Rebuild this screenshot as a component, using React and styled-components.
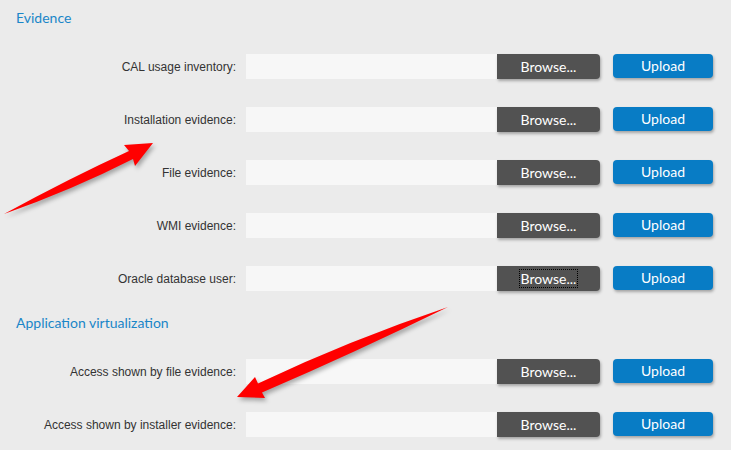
import React from "react";
import styled, { createGlobalStyle } from "styled-components";

const GlobalStyle = createGlobalStyle`
  html, body {
    margin: 0;
    padding: 0;
    background: #ebebeb;
  }
  body {
    font-family: "Liberation Sans", Arial, sans-serif;
  }
`;

const Page = styled.div`
  position: relative;
  width: 731px;
  height: 450px;
  overflow: hidden;
  padding: 8px 0 0 16px;
  box-sizing: border-box;
`;

const SectionTitle = styled.h2`
  margin: ${(p) => (p.$first ? "0" : "22px")} 0 26px 0;
  font-family: Lato, "Open Sans", sans-serif;
  font-weight: 400;
  font-size: 14px;
  line-height: 20px;
  color: #1a86c8;
`;

const Rows = styled.div`
  display: flex;
  flex-direction: column;
  gap: 28px;
`;

const Row = styled.div`
  display: flex;
  align-items: center;
  height: 25px;
`;

const Label = styled.label`
  width: 220px;
  margin-right: 10px;
  text-align: right;
  font-size: 12px;
  color: #333;
  white-space: nowrap;
`;

const FileField = styled.div`
  width: 251px;
  height: 25px;
  background: #f7f7f7;
`;

const Browse = styled.button`
  width: 103px;
  height: 25px;
  border: none;
  padding: 0;
  background: #525252;
  color: #fff;
  border-radius: 0 4px 4px 0;
  box-shadow: 1px 2px 3px rgba(0, 0, 0, 0.3);
  font-family: Lato, "Open Sans", sans-serif;
  font-size: 14px;
  display: flex;
  align-items: center;
  justify-content: center;

  span {
    padding: 0 1px;
    line-height: 17px;
    outline: ${(p) => (p.$focused ? "1px dotted #000" : "none")};
  }
`;

const Upload = styled.button`
  margin-left: 13px;
  margin-top: -2px;
  width: 100px;
  height: 24px;
  border: none;
  padding: 0;
  background: #087cc5;
  color: #fff;
  border-radius: 4px;
  box-shadow: 1px 2px 3px rgba(0, 0, 0, 0.3);
  font-family: Lato, "Open Sans", sans-serif;
  font-size: 14px;
`;

const Overlay = styled.svg`
  position: absolute;
  left: 0;
  top: 0;
  pointer-events: none;
  filter: drop-shadow(2px 3px 2px rgba(0, 0, 0, 0.3));
`;

const evidence = [
  "CAL usage inventory:",
  "Installation evidence:",
  "File evidence:",
  "WMI evidence:",
  "Oracle database user:",
];

const virtualization = [
  "Access shown by file evidence:",
  "Access shown by installer evidence:",
];

function UploadRow({ label, focused }) {
  return (
    <Row>
      <Label>{label}</Label>
      <FileField />
      <Browse $focused={focused}>
        <span>Browse...</span>
      </Browse>
      <Upload>Upload</Upload>
    </Row>
  );
}

export default function App() {
  return (
    <>
      <GlobalStyle />
      <Page>
        <SectionTitle $first>Evidence</SectionTitle>
        <Rows>
          {evidence.map((l) => (
            <UploadRow key={l} label={l} focused={l === "Oracle database user:"} />
          ))}
        </Rows>
        <SectionTitle>Application virtualization</SectionTitle>
        <Rows>
          {virtualization.map((l) => (
            <UploadRow key={l} label={l} />
          ))}
        </Rows>
        <Overlay width="731" height="450" viewBox="0 0 731 450">
          {/* arrow pointing at "Installation evidence" */}
          <path
            fill="#ff0000"
            d="M4 214 Q70 178 129 151 L124 145 L153 143 L135 166 L133 159 Q72 190 4 214 Z"
          />
          {/* arrow pointing at "Access shown by installer evidence" */}
          <path
            fill="#ff0000"
            d="M237 397 L255 377 L258 383.4 Q350 340 448 307 Q356 352 262 392.6 L265 398 Z"
          />
        </Overlay>
      </Page>
    </>
  );
}
